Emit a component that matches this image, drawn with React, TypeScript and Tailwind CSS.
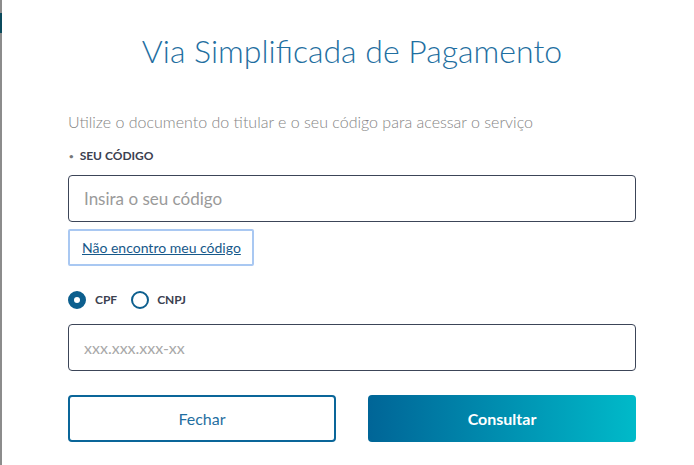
import React, { useState } from 'react';

export default function App() {
  const [doc, setDoc] = useState<'cpf' | 'cnpj'>('cpf');

  return (
    <div className="relative flex h-[465px] w-[694px] overflow-hidden bg-white" style={{ fontFamily: 'Lato, "Noto Sans", sans-serif' }}>
      {/* left edge of the page behind the modal */}
      <div className="flex w-[2px] flex-col bg-[#8c8c8c]">
        <div className="mt-[13px] h-[20px] bg-[#0b4a5c]" />
      </div>

      <div className="ml-[66px] w-[568px]">
        <h1 className="mt-[32px] text-center text-[32px] font-light leading-[38px] text-[#1f6fa1]">
          Via Simplificada de Pagamento
        </h1>

        <p className="mt-[42px] text-[16px] font-light leading-[20px] text-[#858585]">
          Utilize o documento do titular e o seu código para acessar o serviço
        </p>

        <div className="mt-[17px] flex items-center gap-[6px] text-[12px] font-bold leading-[14px] text-[#3b4150]">
          <span className="ml-[1px] text-[8px] text-[#777]">•</span>
          <span>SEU CÓDIGO</span>
        </div>

        <input
          placeholder="Insira o seu código"
          className="mt-[12px] h-[47px] w-full rounded-[4px] border border-[#3c4558] px-[15px] text-[17px] text-[#333] outline-none placeholder:text-[#9a9a9a]"
        />

        <div className="mt-[7px] flex h-[37px] w-[186px] items-center whitespace-nowrap rounded-[2px] border-2 border-[#a9c8f2] pl-[12px]">
          <a href="#" className="text-[14px] leading-[16px] text-[#17598a] underline">
            Não encontro meu código
          </a>
        </div>

        <div className="mt-[25px] flex items-center text-[12px] font-bold text-[#3b4150]">
          <button onClick={() => setDoc('cpf')} className="flex items-center gap-[9px]">
            <span className={`flex h-[18px] w-[18px] items-center justify-center rounded-full border-2 border-[#0d5f8e] ${doc === 'cpf' ? 'bg-[#0d5f8e]' : 'bg-white'}`}>
              {doc === 'cpf' && <span className="h-[6px] w-[6px] rounded-full bg-white" />}
            </span>
            CPF
          </button>
          <button onClick={() => setDoc('cnpj')} className="ml-[14px] flex items-center gap-[8px]">
            <span className={`flex h-[18px] w-[18px] items-center justify-center rounded-full border-2 border-[#0d5f8e] ${doc === 'cnpj' ? 'bg-[#0d5f8e]' : 'bg-white'}`}>
              {doc === 'cnpj' && <span className="h-[6px] w-[6px] rounded-full bg-white" />}
            </span>
            CNPJ
          </button>
        </div>

        <input
          placeholder={doc === 'cpf' ? 'xxx.xxx.xxx-xx' : 'xx.xxx.xxx/xxxx-xx'}
          className="mt-[15px] h-[47px] w-full rounded-[4px] border border-[#3c4558] px-[15px] text-[16px] text-[#333] outline-none placeholder:text-[#a8a8a8]"
        />

        <div className="mt-[24px] grid grid-cols-2 gap-[32px]">
          <button className="h-[47px] rounded-[4px] border-2 border-[#0a6699] text-[16px] text-[#1f6fa1]">
            Fechar
          </button>
          <button className="h-[47px] rounded-[4px] bg-gradient-to-r from-[#006597] to-[#00bac9] text-[16px] font-bold text-white">
            Consultar
          </button>
        </div>
      </div>
    </div>
  );
}
